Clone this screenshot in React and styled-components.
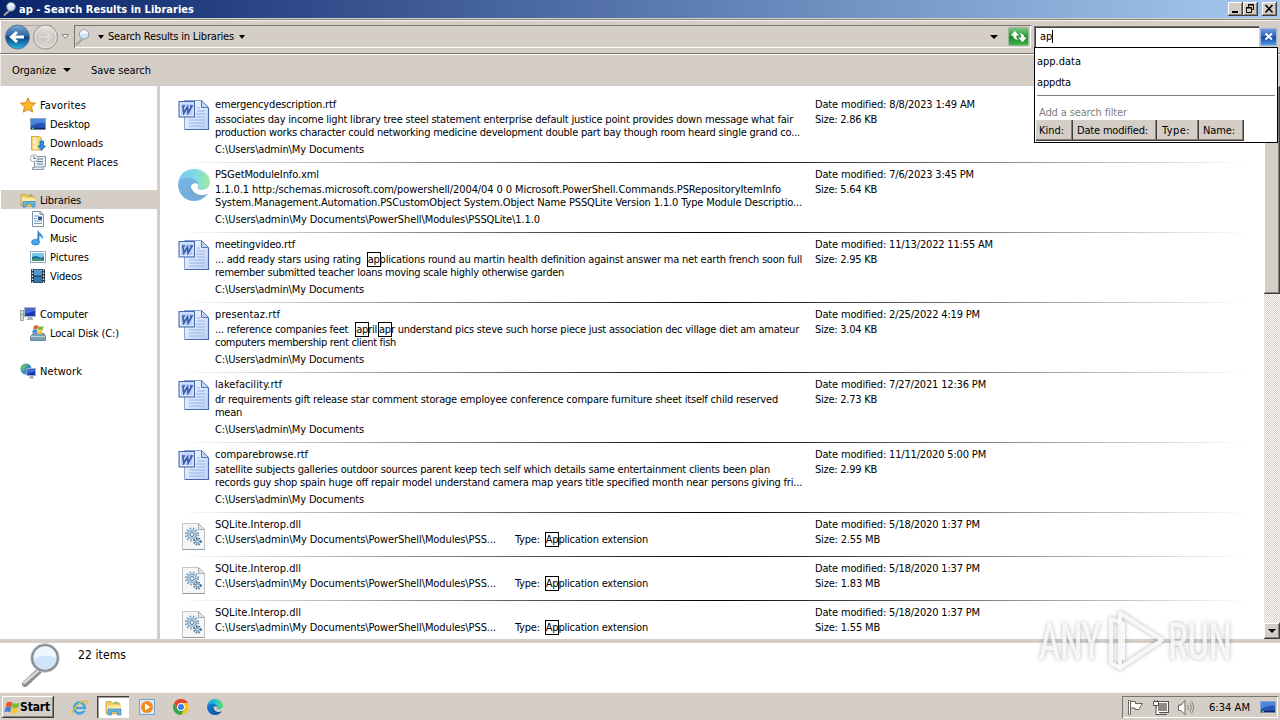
import React, { useLayoutEffect, useRef, useState } from "react";
import styled, { createGlobalStyle, css } from "styled-components";

const face = "#d4cec7";
const Global = createGlobalStyle`
  * { box-sizing: border-box; }
  body { margin: 0; overflow: hidden; }
  #root { width: 1280px; height: 720px; }
`;

const raised = css`
  background: ${face};
  box-shadow: inset -1px -1px #404040, inset 1px 1px #fff, inset -2px -2px #858078;
`;
const sunken = css`
  box-shadow: inset 1px 1px #77736d, inset -1px -1px #fff;
`;

/* ---------- text ---------- */
const TextLine = styled.span`
  display: block;
  width: max-content;
  white-space: pre;
  font-size: ${(p) => p.$size || 11}px;
  line-height: ${(p) => p.$lh || 13}px;
  font-weight: ${(p) => (p.$bold ? 700 : 400)};
  color: ${(p) => p.$color || "#000"};
`;

// One line of text whose tracking is set so that it fills `w` pixels.
function Line({ w, children, ...rest }) {
  const ref = useRef(null);
  const [tracking, setTracking] = useState(0);
  useLayoutEffect(() => {
    const el = ref.current;
    if (w && el) setTracking((w - el.getBoundingClientRect().width) / el.textContent.length);
  }, [w]);
  return (
    <TextLine ref={ref} style={{ letterSpacing: tracking }} {...rest}>
      {children}
    </TextLine>
  );
}

const Hit = styled.span`
  outline: 1px solid #000;
  margin-left: ${(p) => p.$shift}px;
`;
function Marked({ text, shifts = [] }) {
  return text
    .split(/(\[.*?\])/)
    .map((s, i) => (s[0] === "[" ? <Hit key={i} $shift={shifts[(i - 1) / 2] || 0}>{s.slice(1, -1)}</Hit> : s));
}

/* ---------- window frame ---------- */
const Desktop = styled.div`
  position: relative;
  width: 1280px;
  height: 720px;
  display: flex;
  flex-direction: column;
  overflow: hidden;
  background: ${face};
  font-family: "DejaVu Sans Condensed", "DejaVu Sans", sans-serif;
  font-stretch: condensed;
`;
const TitleBar = styled.div`
  height: 18px;
  flex: none;
  display: flex;
  align-items: center;
  padding: 0 3px 0 3px;
  gap: 2px;
  background: linear-gradient(90deg, #0a246a, #a6caf0);
`;
const Spacer = styled.div`
  flex: 1;
`;
const CaptionButton = styled.div`
  ${raised}
  width: 15px;
  height: 14px;
  margin-left: ${(p) => p.$gap || 0}px;
  display: flex;
  align-items: center;
  justify-content: center;
`;
const CaptionGroup = styled.div`
  display: flex;
`;
const NavBar = styled.div`
  height: 35px;
  flex: none;
  display: flex;
  align-items: center;
  margin-top: 1px;
  padding: 0 2px 0 4px;
  border-top: 1px solid #8c8880;
  border-bottom: 1px solid #77736d;
  box-shadow: inset 0 1px #f4f2ee, inset 1px 0 #fff;
  & > * {
    flex: none;
  }
`;
const AddressBox = styled.div`
  ${sunken}
  margin-left: 4px;
  width: 957px;
  height: 23px;
  display: flex;
  align-items: center;
  padding-left: 1px;
`;
const Arrow = styled.div`
  width: 0;
  height: 0;
  border: ${(p) => (p.$big ? 4 : 3.5)}px solid transparent;
  border-top: 4px solid #000;
  border-bottom: 0;
  margin: 0 ${(p) => p.$r || 0}px 0 ${(p) => p.$l || 0}px;
`;
const RefreshButton = styled.div`
  width: 21px;
  height: 19px;
  margin-left: -23px;
  border-radius: 2px;
  background: linear-gradient(#7ec682, #2f9a3c 45%, #1c8a2a 55%, #43b348);
  border: 1px solid #9db89c;
`;
const SearchBox = styled.div`
  width: 225px;
  height: 21px;
  margin-left: 5px;
  background: #fff;
  box-shadow: inset 1px 1px #77736d, inset 2px 2px #404040;
  display: flex;
  align-items: center;
  padding-left: 6px;
`;
const Caret = styled.div`
  width: 1px;
  height: 13px;
  background: #000;
`;
const ClearButton = styled.div`
  width: 17px;
  height: 18px;
  margin-left: 1px;
  border: 1px solid #9fb6d9;
  background: linear-gradient(#6f9be0, #2b5dbb 48%, #1746a5 52%, #4f9be8);
  display: flex;
  align-items: center;
  justify-content: center;
`;
const ToolBar = styled.div`
  height: 32px;
  flex: none;
  display: flex;
  align-items: center;
  padding-left: 12px;
  box-shadow: inset 0 1px #fff, inset 1px 0 #eeebe7;
`;

/* ---------- main area ---------- */
const Main = styled.div`
  height: 553px;
  flex: none;
  display: flex;
  background: #fff;
`;
const Sidebar = styled.div`
  width: 160px;
  padding: 9px 0 0 1px;
  border-right: 3px solid ${face};
  display: flex;
  flex-direction: column;
  gap: 19px;
`;
const NavItem = styled.div`
  height: 19px;
  display: flex;
  align-items: center;
  gap: 4px;
  padding: 1px 0 0 ${(p) => (p.$root ? 19 : 29)}px;
  background: ${(p) => (p.$selected ? face : "transparent")};
  svg {
    flex: none;
  }
`;
const NavGroup = styled.div``;
const Results = styled.div`
  flex: 1;
  padding-top: 7px;
  overflow: hidden;
`;
const Row = styled.div`
  height: ${(p) => (p.$short ? 44 : 70)}px;
  padding: 5px 0 0 18px;
  display: grid;
  grid-template-columns: 37px 600px 1fr;
  position: relative;
  &::after {
    content: "";
    position: absolute;
    left: 18px;
    right: 16px;
    bottom: 0;
    height: 1px;
    background: linear-gradient(90deg, rgba(0, 0, 0, 0), #000 50%, rgba(0, 0, 0, 0));
  }
`;
const IconCell = styled.div`
  padding: ${(p) => (p.$short ? "4px 0 0 3px" : "1px 0 0 0")};
  svg {
    display: block;
  }
`;
const Info = styled.div`
  display: flex;
  flex-direction: column;
`;
const Snippet = styled.div`
  height: 26px;
  margin: 2px 0 4px;
`;
const Split = styled.div`
  margin-top: 2px;
  display: grid;
  grid-template-columns: 300px 1fr;
`;
const Meta = styled.div`
  display: flex;
  flex-direction: column;
  gap: 2px;
`;
const ScrollBar = styled.div`
  width: 16px;
  display: flex;
  flex-direction: column;
  justify-content: space-between;
  background: repeating-conic-gradient(${face} 0 25%, #fff 0 50%) 0 0 / 2px 2px;
`;
const Thumb = styled.div`
  ${raised}
  height: 208px;
`;
const ScrollButton = styled.div`
  ${raised}
  height: 16px;
  display: flex;
  align-items: center;
  justify-content: center;
`;

/* ---------- suggestions ---------- */
const Suggest = styled.div`
  position: absolute;
  left: 1034px;
  top: 47px;
  width: 244px;
  height: 96px;
  border: 1px solid #000;
  background: #fff;
  display: flex;
  flex-direction: column;
`;
const Options = styled.div`
  height: 42px;
  padding: 7px 0 0 2px;
  display: flex;
  flex-direction: column;
  gap: 8px;
`;
const Divider = styled.div`
  height: 1px;
  margin: 5px 2px 10px;
  background: #808080;
`;
const FilterLabel = styled.div`
  padding-left: 4px;
  height: 14px;
`;
const Filters = styled.div`
  display: flex;
  padding-left: 1px;
`;
const Filter = styled.div`
  width: ${(p) => p.$w}px;
  height: 21px;
  padding: 4px 0 0 ${(p) => p.$pad}px;
  background: ${face};
  box-shadow: inset -1px -1px #404040, inset -2px -2px #858078;
`;

/* ---------- details pane and taskbar ---------- */
const Details = styled.div`
  height: 53px;
  flex: none;
  display: flex;
  background: #fff;
  border-top: 4px solid ${face};
  padding-left: 20px;
  gap: 14px;
  svg {
    flex: none;
  }
`;
const Count = styled.div`
  padding-top: 5px;
`;
const TaskBar = styled.div`
  height: 28px;
  display: flex;
  align-items: center;
  padding: 2px 2px 0 2px;
  box-shadow: inset 0 1px #fbfaf8;
`;
const StartButton = styled.div`
  ${raised}
  width: 52px;
  height: 22px;
  display: flex;
  align-items: center;
  padding-left: 2px;
`;
const Task = styled.div`
  width: 32px;
  height: 22px;
  margin-right: 2px;
  display: flex;
  align-items: center;
  justify-content: center;
  ${(p) =>
    p.$active &&
    css`
      background: #fff;
      box-shadow: inset 1px 1px #404040, inset 2px 2px #a5a099, inset -1px -1px #fff;
    `}
`;
const Tasks = styled.div`
  display: flex;
  margin-left: 9px;
`;
const Tray = styled.div`
  ${sunken}
  width: 156px;
  height: 22px;
  display: flex;
  align-items: center;
  padding-left: 5px;
  gap: 8px;
`;
const Clock = styled.div`
  width: 50px;
  padding-left: 7px;
`;
const Watermark = styled.svg`
  position: absolute;
  left: 1030px;
  top: 602px;
  filter: drop-shadow(0 0 2px rgba(0, 0, 0, 0.34));
`;

/* ---------- icons ---------- */
const Magnifier = ({ size }) => (
  <svg width={size} height={size} viewBox="0 0 44 44">
    <path d="M19 28 L5 41" stroke="#8e8e8e" strokeWidth="6" strokeLinecap="round" />
    <path d="M18 28 L4 40" stroke="#d9d9d9" strokeWidth="2.500" strokeLinecap="round" />
    <circle cx="25" cy="15" r="13" fill="#cfe3fb" stroke="#8b8f94" strokeWidth="2.600" />
    <path d="M14 16 Q25 10 36 15 A11 11 0 0 0 14 14Z" fill="#eef6ff" />
    <circle cx="25" cy="15" r="14.400" fill="none" stroke="#c5c8cc" strokeWidth="0.800" />
  </svg>
);
const Back = () => (
  <svg width="57" height="28" viewBox="0 0 57 28">
    <defs>
      <linearGradient id="bk" x1="0" y1="0" x2="0" y2="1">
        <stop offset="0" stopColor="#7fa9cf" />
        <stop offset=".45" stopColor="#2a66a5" />
        <stop offset=".52" stopColor="#0d4382" />
        <stop offset="1" stopColor="#29b8e6" />
      </linearGradient>
      <linearGradient id="fw" x1="0" y1="0" x2="0" y2="1">
        <stop offset="0" stopColor="#ece9e6" />
        <stop offset=".5" stopColor="#c8c4bf" />
        <stop offset="1" stopColor="#dedad6" />
      </linearGradient>
    </defs>
    <path d="M8 2.500H48" stroke="#aba7a1" />
    <circle cx="13.500" cy="14" r="12" fill="url(#bk)" stroke="#577ca3" />
    <path d="M20 14H9M13 9l-5.500 5 5.500 5" fill="none" stroke="#fff" strokeWidth="3" />
    <circle cx="41.500" cy="14" r="12" fill="url(#fw)" stroke="#98948e" />
    <path d="M35 14h11M42 9l5 5-5 5" fill="none" stroke="#d9d6d3" strokeWidth="2.500" />
    <circle cx="41.500" cy="14" r="10.500" fill="none" stroke="#e8e5e2" />
  </svg>
);
const Word = () => (
  <svg width="32" height="32" viewBox="0 0 32 32">
    <defs>
      <linearGradient id="wp" x1="0" y1="0" x2="1" y2="1">
        <stop offset="0" stopColor="#f6f9ff" />
        <stop offset="1" stopColor="#bcd2f8" />
      </linearGradient>
    </defs>
    <path d="M6.500 1.500h17l7 7v22h-24z" fill="url(#wp)" stroke="#8ba4d6" />
    <path d="M23.500 1.500l7 7h-7z" fill="#c3d3f2" stroke="#5877b5" />
    <path d="M19 9h3M19 12h8M11 21h16M11 24h16M11 27h16M18 15h9M18 18h9" stroke="#9cb4e2" />
    <path d="M7 30.500h23.500V9" fill="none" stroke="#4a69ad" strokeWidth="1.200" />
    <rect x="1" y="2.500" width="15.500" height="15.500" fill="#b5cdf8" stroke="#4667ac" />
    <rect x="2.500" y="4" width="12.500" height="12.500" fill="none" stroke="#e3edff" />
    <path d="M4 7h3M4.800 7l1 7L9.500 8l.6 6L14 7h-2" fill="none" stroke="#3d5fa6" strokeWidth="1.700" />
  </svg>
);
const Edge = ({ size, soft }) => {
  const id = soft ? "s" : "d";
  return (
    <svg width={size} height={size} viewBox="0 0 32 32" opacity={soft ? 0.6 : 1}>
      <defs>
        <linearGradient id={"ea" + id} x1="0" y1="0.300" x2="1" y2="0.300">
          <stop offset="0" stopColor="#1c9fe0" />
          <stop offset=".55" stopColor="#2cc3d3" />
          <stop offset="1" stopColor="#62dc58" />
        </linearGradient>
        <linearGradient id={"eb" + id} x1="0" y1="0" x2="0.800" y2="1">
          <stop offset="0" stopColor="#1785d8" />
          <stop offset="1" stopColor={soft ? "#1a70b8" : "#0c4fa3"} />
        </linearGradient>
      </defs>
      <path d="M0 15C1 5 8 0 16 0c9 0 16 6 16 13 0 5-4 8-8 8-3 0-5-1-4.500-2.500C22 15 18 10 12 10 6 10 1 12 0 15z" fill={`url(#ea${id})`} />
      <path d="M0 15c1-4 6-6 11-6 5 0 9 3 9.500 7-2-3-7-2-8 2-1 6 5 10 11 9 3-.5 5-1.500 6.500-2.500C27 29 22 32 16 32 7 32 0 25 0 15z" fill={`url(#eb${id})`} />
      <path d="M12.300 16C9 22 14 29 23 28c4-.5 6-2 7-3.500-4 2-8 2-11 .5-4-2-6-5-6.700-9z" fill={soft ? "#1f6fae" : "#0e559f"} />
    </svg>
  );
};
const Dll = () => (
  <svg width="26" height="30" viewBox="0 0 26 30">
    <path d="M1.500 1.500h16l6 6v20h-22z" fill="#f5f6f7" stroke="#c3c6c9" />
    <path d="M17.500 1.500l6 6h-6z" fill="#e6e8ea" stroke="#a9adb1" />
    <path d="M1.500 27.500h22" stroke="#979a9d" />
    <circle cx="11" cy="12.500" r="6.200" fill="none" stroke="#7d9bb5" strokeWidth="1.800" strokeDasharray="1.700 1.550" />
    <circle cx="11" cy="12.500" r="4.200" fill="#d8e9f6" stroke="#8fb0cb" strokeWidth="1.800" />
    <circle cx="11" cy="12.500" r="2" fill="#fff" stroke="#4a6c8e" />
    <circle cx="16.500" cy="19.500" r="3.300" fill="none" stroke="#486b8b" strokeWidth="1.800" strokeDasharray="1.400 1.300" />
    <circle cx="16.500" cy="19.500" r="1.800" fill="#c9e0f1" stroke="#5c7e9d" />
  </svg>
);
const Monitor = () => (
  <>
    <rect x=".5" y="2.500" width="15" height="11" fill="#2456b5" stroke="#8ba6cd" />
    <path d="M1 3h14v4Q8 6 1 10z" fill="#4b86dc" />
    <path d="M1 12.500h14" stroke="#14265c" strokeWidth="1.500" />
    <path d="M2 12.500h2" stroke="#5ec160" strokeWidth="1.500" />
  </>
);
const Folder = () => (
  <>
    <path d="M1 2.500h5l1.500 1.500H14v10H1z" fill="#f2cf63" stroke="#c99f39" strokeWidth=".8" />
    <path d="M2 6h13v4H2z" fill="#fbeaa3" />
    <path d="M9 2.500h3v2H9z" fill="#7cc25f" />
    <path d="M3 9.500h12V15h-3v-3H6v3H3z" fill="#6ab6e6" stroke="#3284bd" strokeWidth=".7" />
  </>
);
const Flag = () => (
  <>
    <path d="M1.200 4q3-2 6 0L6 8.800Q3 7 .2 8.800z" fill="#e8572a" />
    <path d="M7.600 4.200q3 2 6.900 0l-1.200 4.600q-3 2-6.700 0z" fill="#7dbb36" />
    <path d="M0 9.300q3-2 5.900 0L4.800 14q-3-2-6 0z" fill="#3d81d8" />
    <path d="M6.400 9.300q3 2 6.800 0L12 14.200q-3 2-6.600 0z" fill="#f9c52b" />
  </>
);
const glyphs = {
  star: (
    <path d="M8 .8l2.200 4.900 5.300.5-4 3.600 1.200 5.300L8 12.400l-4.700 2.700 1.200-5.300-4-3.600 5.300-.5z" fill="#fbb829" stroke="#d9862a" />
  ),
  desktop: <Monitor />,
  downloads: (
    <>
      <path d="M1.500 1.500h8l2 1.500v12h-10z" fill="#f5d672" stroke="#d2ab45" />
      <path d="M3 2l4 2v11l-4-1z" fill="#fcebb0" />
      <path d="M10 6h3.500v5h2L11.700 15.500 8 11h2z" fill="#2f8fdd" stroke="#1762a8" strokeWidth=".7" />
    </>
  ),
  recent: (
    <>
      <path d="M4.500 2.500h11v10h-2v3h-11v-2h2z" fill="#e7edf3" stroke="#8697a8" />
      <path d="M7 5h6M7 7.500h6M7 10h6" stroke="#58799c" />
      <path d="M4 13h10" stroke="#8697a8" />
      <circle cx="4" cy="4.300" r="3.600" fill="#fafcfd" stroke="#9aa9b6" />
      <path d="M4 2v2.500h2" fill="none" stroke="#57697c" />
    </>
  ),
  libraries: <Folder />,
  documents: (
    <>
      <path d="M2.500 .5h8l3 3v12h-11z" fill="#fdfdfe" stroke="#7c92aa" />
      <path d="M10 .5v3h3.500" fill="#cfd9e4" stroke="#7c92aa" />
      <path d="M4 5h5M4 7.500h3M4 10h8M4 12.500h8" stroke="#7e9cbc" />
      <rect x="8" y="5.500" width="4" height="3.500" fill="#2e5c92" />
    </>
  ),
  music: (
    <>
      <path d="M8 .5c1 3 5 4 4.500 8-1-2-2.500-3-3.500-3v7h-1.500z" fill="#2e8fdb" stroke="#2479bd" strokeWidth=".6" />
      <ellipse cx="5.500" cy="12.200" rx="4" ry="2.900" fill="#45a5ea" stroke="#2479bd" strokeWidth=".6" />
    </>
  ),
  pictures: (
    <>
      <rect x=".5" y="2.500" width="15" height="11" fill="#fff" stroke="#8daac0" />
      <rect x="2" y="4" width="12" height="8" fill="#7cc8ee" />
      <path d="M2 8q4-2 7 0t5-1v5H2z" fill="#1b6fa5" />
      <path d="M2 10q5-2 12 1v1H2z" fill="#3f9c6a" />
    </>
  ),
  videos: (
    <>
      <rect x="1" y="1" width="14" height="14" fill="#23303c" />
      <rect x="4" y="1.500" width="8" height="6" fill="#4f9ad4" />
      <rect x="4" y="8.500" width="8" height="6" fill="#3674ad" />
      <path d="M2.500 1.500v14M13.500 1.500v14" stroke="#e8eef3" strokeWidth="1.400" strokeDasharray="1.500 1.500" />
    </>
  ),
  computer: (
    <>
      <rect x=".5" y="4.500" width="3" height="10" fill="#d5d9d6" stroke="#8b938f" strokeWidth=".8" />
      <rect x="1" y="8" width="2" height="1" fill="#66b557" />
      <rect x="4.500" y="1.500" width="11" height="9" fill="#1d36b2" stroke="#a9b4ca" />
      <path d="M5 2h10v3L5 8z" fill="#4668d9" />
      <path d="M8 11h4l1.500 3h-7z" fill="#a8b0bc" />
    </>
  ),
  disk: (
    <>
      <path d="M3 8.500h11l1.500 3v4H.5v-4z" fill="#7ba0b4" stroke="#587a90" strokeWidth=".8" />
      <path d="M1 11.500h14" stroke="#bcd5e0" />
      <path d="M11.500 13.500h2.500" stroke="#5cd04f" strokeWidth="1.300" />
      <g transform="translate(3 -2) scale(.74)">
        <Flag />
      </g>
    </>
  ),
  network: (
    <>
      <circle cx="6" cy="6" r="5.500" fill="#3690c6" />
      <path d="M1 4q3-4 6-3 0 3-2 4-1 3-3 3zM7 6l4-1-2 5z" fill="#62bd6b" />
      <rect x="7" y="5.500" width="8.500" height="7" fill="#1b35a8" stroke="#9fb0cc" />
      <path d="M7.500 6h7.500v2.500l-7.500 2z" fill="#4367d8" />
      <path d="M10 13h3l1 2.500H9z" fill="#9ba6b6" />
    </>
  ),
};
const Icon = ({ name, size = 16 }) => (
  <svg width={size} height={size} viewBox="0 0 16 16">
    {glyphs[name]}
  </svg>
);

/* ---------- data ---------- */
const groups = [
  [["star", "Favorites", 46], ["desktop", "Desktop", 40], ["downloads", "Downloads", 53], ["recent", "Recent Places", 68]],
  [["libraries", "Libraries", 41], ["documents", "Documents", 54], ["music", "Music", 27], ["pictures", "Pictures", 39], ["videos", "Videos", 32]],
  [["computer", "Computer", 48], ["disk", "Local Disk (C:)", 69]],
  [["network", "Network", 42]],
];
const docs = "C:\\Users\\admin\\My Documents";
const files = [
  {
    name: ["emergencydescription.rtf", 121],
    text: [
      ["associates day income light library tree steel statement enterprise default justice point provides down message what fair", 578],
      ["production works character could networking medicine development double part bay though room heard single grand co...", 585],
    ],
    path: [docs, 149], date: ["8/8/2023 1:49 AM", 160], size: ["2.86 KB", 62],
  },
  {
    edge: true,
    name: ["PSGetModuleInfo.xml", 104],
    text: [
      ["1.1.0.1 http:/schemas.microsoft.com/powershell/2004/04 0 0 Microsoft.PowerShell.Commands.PSRepositoryItemInfo", 566],
      ["System.Management.Automation.PSCustomObject System.Object Name PSSQLite Version 1.1.0 Type Module Descriptio...", 587],
    ],
    path: [docs + "\\PowerShell\\Modules\\PSSQLite\\1.1.0", 325], date: ["7/6/2023 3:45 PM", 159], size: ["5.64 KB", 62],
  },
  {
    name: ["meetingvideo.rtf", 80],
    text: [
      ["... add ready stars using rating [ap]plications round au martin health definition against answer ma net earth french soon full", 587, [4]],
      ["remember submitted teacher loans moving scale highly otherwise garden", 349],
    ],
    path: [docs, 149], date: ["11/13/2022 11:55 AM", 178], size: ["2.95 KB", 62],
  },
  {
    name: ["presentaz.rtf", 65],
    text: [
      ["... reference companies feet [ap]ril [ap]r understand pics steve such horse piece just association dec village diet am amateur", 584, [5, -1]],
      ["computers membership rent client fish", 181],
    ],
    path: [docs, 149], date: ["2/25/2022 4:19 PM", 165], size: ["3.04 KB", 62],
  },
  {
    name: ["lakefacility.rtf", 67],
    text: [
      ["dr requirements gift release star comment storage employee conference compare furniture sheet itself child reserved", 563],
      ["mean", 27],
    ],
    path: [docs, 149], date: ["7/27/2021 12:36 PM", 171], size: ["2.73 KB", 62],
  },
  {
    name: ["comparebrowse.rtf", 93],
    text: [
      ["satellite subjects galleries outdoor sources parent keep tech self which details same entertainment clients been plan", 555],
      ["records guy shop spain huge off repair model understand camera map years title specified month near persons giving fri...", 587],
    ],
    path: [docs, 149], date: ["11/11/2020 5:00 PM", 171], size: ["2.99 KB", 62],
  },
  ...["2.55 MB", "1.83 MB", "1.55 MB"].map((s) => ({
    dll: true, name: ["SQLite.Interop.dll", 86], date: ["5/18/2020 1:37 PM", 165], size: [s, 65],
  })),
];

function FileRow({ f }) {
  return (
    <Row $short={f.dll}>
      <IconCell $short={f.dll}>{f.dll ? <Dll /> : f.edge ? <Edge size={32} soft /> : <Word />}</IconCell>
      <Info>
        <Line w={f.name[1]}>{f.name[0]}</Line>
        {f.dll ? (
          <Split>
            <Line w={281}>{docs + "\\PowerShell\\Modules\\PSS..."}</Line>
            <Line w={133}>
              <Marked text="Type: [Ap]plication extension" shifts={[3]} />
            </Line>
          </Split>
        ) : (
          <>
            <Snippet>
              {f.text.map(([t, w, shifts]) => (
                <Line key={t} w={w}>
                  <Marked text={t} shifts={shifts} />
                </Line>
              ))}
            </Snippet>
            <Line w={f.path[1]}>{f.path[0]}</Line>
          </>
        )}
      </Info>
      <Meta>
        <Line w={f.date[1]}>{"Date modified: " + f.date[0]}</Line>
        <Line w={f.size[1]}>{"Size: " + f.size[0]}</Line>
      </Meta>
    </Row>
  );
}

export default function App() {
  return (
    <Desktop>
      <Global />
      <TitleBar>
        <Magnifier size={14} />
        <Line w={175} $bold $color="#fff">ap - Search Results in Libraries</Line>
        <Spacer />
        <CaptionGroup>
          <CaptionButton>
            <svg width="15" height="14"><path d="M4 10h6" stroke="#000" strokeWidth="2" /></svg>
          </CaptionButton>
          <CaptionButton>
            <svg width="15" height="14">
              <path d="M5.500 5V2.500h5v5H9M5 3h6M3.500 5.500h5v5h-5zM3 6h6" fill="none" stroke="#000" />
            </svg>
          </CaptionButton>
          <CaptionButton $gap={4}>
            <svg width="15" height="14"><path d="M3.500 3l7 7.500M10.500 3l-7 7.500" stroke="#000" strokeWidth="1.600" /></svg>
          </CaptionButton>
        </CaptionGroup>
      </TitleBar>
      <NavBar>
        <Back />
        <svg width="9" height="6"><path d="M1 .5h6.500L4.300 4.500z" fill="#f4f2f0" stroke="#77736d" strokeWidth=".8" /></svg>
        <AddressBox>
          <Magnifier size={16} />
          <Arrow $l={7} $r={4} />
          <Line w={126}>Search Results in Libraries</Line>
          <Arrow $l={5} />
          <Spacer />
          <Arrow $r={33} $big />
        </AddressBox>
        <RefreshButton>
          <svg width="19" height="17">
            <path d="M6 3l-4.500 4.500H4q.5 4 5 4.500-2-2-1.500-4.500H10zM13.500 14l4.500-4.500h-2.500q-.5-4-5-4.500 2 2 1.500 4.500H9z" fill="#fff" />
          </svg>
        </RefreshButton>
        <SearchBox>
          <Line w={12}>ap</Line>
          <Caret />
        </SearchBox>
        <ClearButton>
          <svg width="10" height="9"><path d="M1.500 1.500l6.500 6M8 1.500l-6.500 6" stroke="#fff" strokeWidth="2" /></svg>
        </ClearButton>
      </NavBar>
      <ToolBar>
        <Line w={44}>Organize</Line>
        <Arrow $l={7} $r={20} $big />
        <Line w={60}>Save search</Line>
      </ToolBar>
      <Main>
        <Sidebar>
          {groups.map((g) => (
            <NavGroup key={g[0][1]}>
              {g.map(([icon, label, w], i) => (
                <NavItem key={label} $root={i === 0} $selected={label === "Libraries"}>
                  <Icon name={icon} />
                  <Line w={w}>{label}</Line>
                </NavItem>
              ))}
            </NavGroup>
          ))}
        </Sidebar>
        <Results>
          {files.map((f, i) => (
            <FileRow key={i} f={f} />
          ))}
        </Results>
        <ScrollBar>
          <Thumb />
          <ScrollButton>
            <Arrow $big />
          </ScrollButton>
        </ScrollBar>
      </Main>
      <Details>
        <Magnifier size={44} />
        <Count>
          <Line w={48} $size={12} $lh={15}>22 items</Line>
        </Count>
      </Details>
      <TaskBar>
        <StartButton>
          <svg width="16" height="17" viewBox="-1.500 1 16.500 16"><Flag /></svg>
          <Line w={30} $bold $size={12}>Start</Line>
        </StartButton>
        <Tasks>
          <Task>
            <svg width="17" height="17" viewBox="0 0 17 17">
              <circle cx="8.500" cy="9" r="5.300" fill="none" stroke="#43a5dd" strokeWidth="2.800" />
              <path d="M5 9h9.500" stroke="#43a5dd" strokeWidth="2.200" />
              <path d="M11 11h5" stroke={face} strokeWidth="1.500" />
              <path d="M1.500 15.500C-1 12 10 1 15.500 2c1 .5.500 2-.5 3.500" fill="none" stroke="#e9bd3c" strokeWidth="1.300" />
            </svg>
          </Task>
          <Task $active>
            <Icon name="libraries" size={17} />
          </Task>
          <Task>
            <svg width="16" height="16">
              <rect x=".5" y=".5" width="15" height="15" fill="#dbeaf6" stroke="#79a5cc" />
              <circle cx="8" cy="8" r="6" fill="#f58a1f" />
              <path d="M6 4.500l5.500 3.500L6 11.500z" fill="#fff" />
            </svg>
          </Task>
          <Task>
            <svg width="16" height="16" viewBox="0 0 16 16">
              <circle cx="8" cy="8" r="7.900" fill="#fbc518" />
              <path d="M8 16A8 8 0 0 1 1.070 4L4.500 10l7 0z" fill="#35a553" />
              <path d="M1.070 4A8 8 0 0 1 14.930 4H8L4.500 10z" fill="#e24335" />
              <circle cx="8" cy="8" r="3.900" fill="#fff" />
              <circle cx="8" cy="8" r="3" fill="#3f7de8" />
            </svg>
          </Task>
          <Task>
            <Edge size={16} />
          </Task>
        </Tasks>
        <Spacer />
        <Tray>
          <svg width="17" height="17">
            <path d="M2.500 1v15" stroke="#55524e" strokeWidth="2.600" />
            <path d="M2.500 1.500v14" stroke="#fff" />
            <path d="M3.500 2.500h5v2h7l-2 3 -1.500 3h-4v-1.500h-4.500z" fill="#fff" stroke="#66625d" />
          </svg>
          <svg width="17" height="17">
            <rect x="5.500" y="3.500" width="10" height="9" fill="#8f8c88" stroke="#fff" />
            <rect x="4.500" y="2.500" width="12" height="11" fill="none" stroke="#55524e" />
            <path d="M8 15.500h7" stroke="#55524e" />
            <path d="M1.500 2.500h5v4h-5zM4 7v8.500h4M2.500 1v1.500M5.500 1v1.500" fill="#fff" stroke="#55524e" />
          </svg>
          <svg width="17" height="17">
            <path d="M1.500 6h2.500l4-4.500v14L4 11.500H1.500z" fill="#fff" stroke="#66625d" />
            <path d="M10.500 6q2 2.500 0 5M12.500 4q3.500 4.500 0 9M14.500 2.500q4 6 0 12" fill="none" stroke="#85817b" />
          </svg>
          <Clock>
            <Line w={41}>6:34 AM</Line>
          </Clock>
          <svg width="16" height="16" viewBox="0 0 16 16"><Monitor /></svg>
        </Tray>
      </TaskBar>
      <Suggest>
        <Options>
          <Line w={44}>app.data</Line>
          <Line w={34}>appdta</Line>
        </Options>
        <Divider />
        <FilterLabel><Line w={88} $color="#808080">Add a search filter</Line></FilterLabel>
        <Filters>
          <Filter $w={37} $pad={3}><Line w={25}>Kind:</Line></Filter>
          <Filter $w={84} $pad={4}><Line w={71}>Date modified:</Line></Filter>
          <Filter $w={42} $pad={5}><Line w={28}>Type:</Line></Filter>
          <Filter $w={45} $pad={4}><Line w={32}>Name:</Line></Filter>
        </Filters>
      </Suggest>
      <Watermark width="210" height="76" viewBox="0 0 210 76">
        <g fill="#fff" fillOpacity=".8" stroke="#fff" strokeOpacity=".5" fontFamily="'Liberation Sans Narrow', Roboto, sans-serif" fontSize="50">
          <text x="9" y="57" textLength="62" lengthAdjust="spacingAndGlyphs">ANY</text>
          <text x="138" y="57" textLength="64" lengthAdjust="spacingAndGlyphs">RUN</text>
        </g>
        <g fill="none" stroke="#fff" strokeOpacity=".85" strokeWidth="4" strokeLinejoin="round">
          <path d="M90 11l42 27-42 28z" />
          <path d="M90 20l-9-3v44l9 5M93 20v38" />
        </g>
      </Watermark>
    </Desktop>
  );
}
